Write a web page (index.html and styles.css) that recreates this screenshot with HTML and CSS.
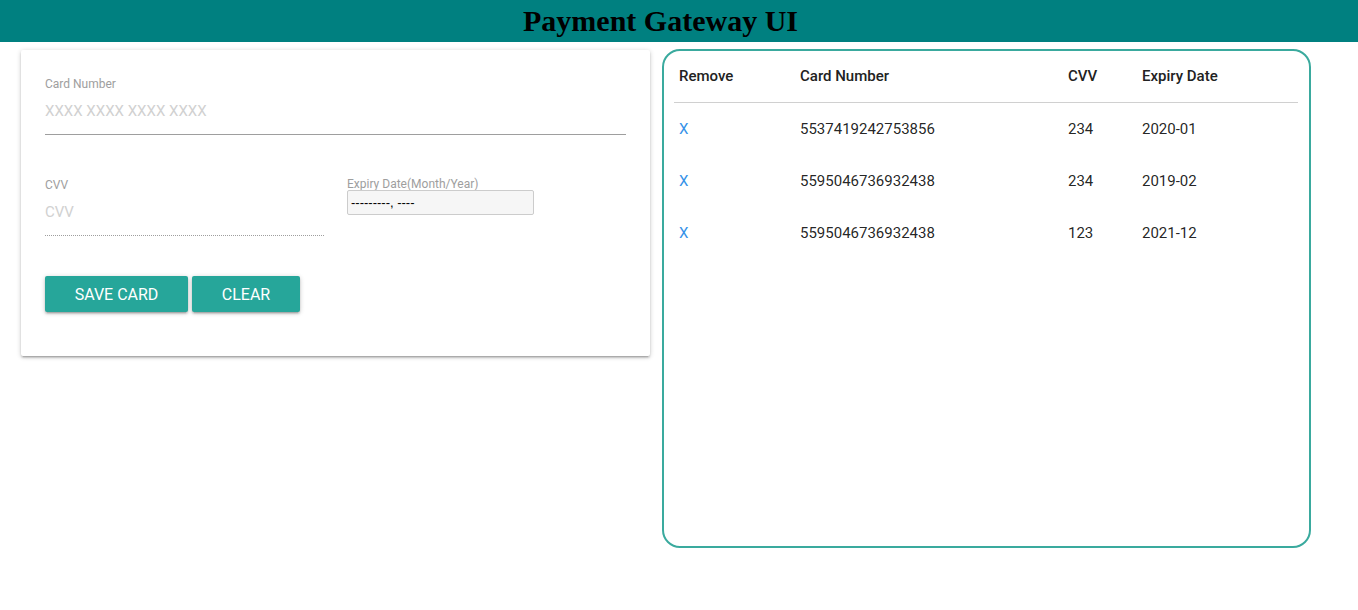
FILE: index.html
```html
<!DOCTYPE html>
<html>
<head>
<meta charset="utf-8">
<title>Payment Gateway UI</title>
<link rel="stylesheet" href="styles.css">
</head>
<body>
<header class="topbar"><h1 class="title">Payment Gateway UI</h1></header>
<main class="layout">
  <section class="card">
    <div class="field">
      <label class="field-label">Card Number</label>
      <div class="input input-solid placeholder">XXXX XXXX XXXX XXXX</div>
    </div>
    <div class="field-row">
      <div class="field field-cvv">
        <label class="field-label">CVV</label>
        <div class="input input-dotted placeholder">CVV</div>
      </div>
      <div class="field field-expiry">
        <label class="field-label small">Expiry Date(Month/Year)</label>
        <div class="month-box">---------, ----</div>
      </div>
    </div>
    <div class="actions">
      <button class="btn btn-save">SAVE CARD</button>
      <button class="btn btn-clear">CLEAR</button>
    </div>
  </section>
  <section class="panel">
    <table class="cards">
      <thead>
        <tr><th class="c-remove">Remove</th><th class="c-num">Card Number</th><th class="c-cvv">CVV</th><th class="c-exp">Expiry Date</th></tr>
      </thead>
      <tbody>
        <tr><td class="x">X</td><td>5537419242753856</td><td>234</td><td>2020-01</td></tr>
        <tr><td class="x">X</td><td>5595046736932438</td><td>234</td><td>2019-02</td></tr>
        <tr><td class="x">X</td><td>5595046736932438</td><td>123</td><td>2021-12</td></tr>
      </tbody>
    </table>
  </section>
</main>
</body>
</html>
```
FILE: styles.css
```css
* { box-sizing: border-box; }
body {
  margin: 0;
  font-family: Roboto, "Liberation Sans", sans-serif;
  color: rgba(0,0,0,0.87);
  background: #fff;
}
.topbar {
  height: 42px;
  background: #008080;
  display: flex;
  justify-content: center;
  align-items: center;
  padding-right: 37px;
}
.title {
  margin: 0;
  font-family: "Liberation Serif", "DejaVu Serif", serif;
  font-weight: bold;
  font-size: 30px;
  color: #000;
  line-height: 42px;
}
.layout {
  display: flex;
  align-items: flex-start;
  padding-left: 21px;
  gap: 12px;
}
.card {
  width: 629px;
  margin-top: 8px;
  height: 306px;
  background: #fff;
  border-radius: 2px;
  box-shadow: 0 2px 2px 0 rgba(0,0,0,0.14), 0 3px 1px -2px rgba(0,0,0,0.12), 0 1px 5px 0 rgba(0,0,0,0.2);
  padding: 28px 24px 0 24px;
}
.field { display: flex; flex-direction: column; }
.field-label {
  font-size: 12px;
  color: #9e9e9e;
  line-height: 12px;
}
.input {
  height: 45px;
  font-size: 15px;
  line-height: 43px;
}
.placeholder { color: #d1d1d1; }
.input-solid { border-bottom: 1px solid #9e9e9e; }
.input-dotted { border-bottom: 1px dotted #9e9e9e; }
.field-row {
  display: flex;
  align-items: flex-start;
  margin-top: 44px;
  gap: 23px;
}
.field-cvv { width: 279px; }
.field-expiry { width: 187px; margin-top: -1px; }
.field-label.small { line-height: 12px; }
.month-box {
  height: 25px;
  border: 1px solid #ccc;
  border-radius: 2px;
  background: #f6f6f6;
  font-size: 13px;
  color: #000;
  line-height: 23px;
  padding-left: 3px;
  font-family: "Liberation Sans", Arial, sans-serif;
}
.actions {
  display: flex;
  gap: 4px;
  margin-top: 40px;
}
.btn {
  height: 36px;
  border: none;
  border-radius: 2px;
  background: #26a69a;
  color: #fff;
  font-family: Roboto, sans-serif;
  font-size: 16px;
  padding: 0;
  box-shadow: 0 2px 2px 0 rgba(0,0,0,0.14), 0 3px 1px -2px rgba(0,0,0,0.12), 0 1px 5px 0 rgba(0,0,0,0.2);
}
.btn-save { width: 143px; }
.btn-clear { width: 108px; }
.panel {
  width: 649px;
  height: 499px;
  margin-top: 7px;
  border: 2px solid #3aaa9e;
  border-radius: 18px;
  padding: 0 11px 0 10px;
}
.cards {
  width: 100%;
  border-collapse: collapse;
  font-size: 15px;
}
.cards th, .cards td {
  text-align: left;
  padding: 0 5px;
  height: 52px;
  vertical-align: middle;
}
.cards td { padding-top: 2px; }
.cards th { font-weight: 500; height: 51px; color: #222; }
.cards thead tr { border-bottom: 1px solid #d0d0d0; }
.c-remove { width: 121px; }
.c-num { width: 268px; }
.c-cvv { width: 74px; }
.x { color: #3592e8; }
```
